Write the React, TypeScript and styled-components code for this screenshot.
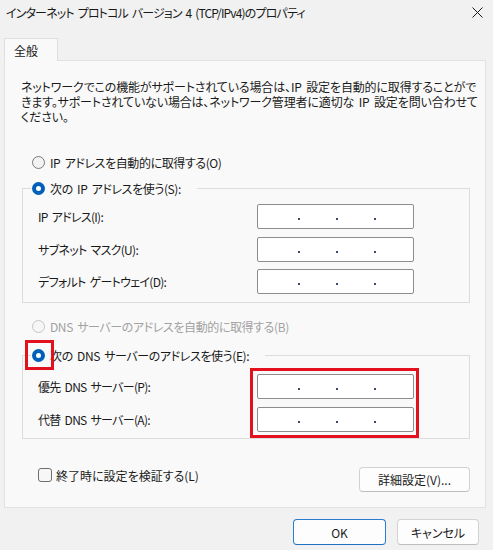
import React from 'react';
import styled, { createGlobalStyle } from 'styled-components';

const GlobalStyle = createGlobalStyle`
  html, body {
    margin: 0;
    padding: 0;
    background: #f1f1f1;
  }
  body {
    font-family: "Noto Sans CJK JP", "Noto Sans", sans-serif;
    font-feature-settings: "palt";
    font-size: 12px;
    word-spacing: 2px;
    color: #1a1a1a;
  }
`;

const Window = styled.div`
  width: 493px;
  height: 550px;
  display: flex;
  flex-direction: column;
  background: #f1f1f1;
  overflow: hidden;
`;

const TitleBar = styled.div`
  height: 25px;
  display: flex;
  align-items: center;
  justify-content: space-between;
  padding: 0 10px 0 6px;
`;

const Title = styled.span`
  white-space: nowrap;
  letter-spacing: -0.85px;
`;

const TabStrip = styled.div`
  display: flex;
  margin: 13px 0 -1px 4px;
  position: relative;
  z-index: 1;
`;

const Tab = styled.div`
  width: 54px;
  height: 23px;
  box-sizing: border-box;
  padding: 3px 0 0 9px;
  background: #f9f9f9;
  border: 1px solid #dedede;
  border-bottom: none;
`;

const Panel = styled.div`
  margin: 0 7px 0 4px;
  height: 448px;
  box-sizing: border-box;
  padding: 18px 15px 0 17px;
  background: #f9f9f9;
  border: 1px solid #e2e2e2;
  display: flex;
  flex-direction: column;
`;

const Intro = styled.p`
  margin: 0 0 0 -1px;
  line-height: 15px;
  white-space: nowrap;
  letter-spacing: -0.15px;
`;

const OptionRow = styled.label<{ $top: number; $disabled?: boolean }>`
  display: flex;
  align-items: center;
  gap: 5px;
  height: 16px;
  margin: ${(p) => p.$top}px 0 0 10px;
  color: ${(p) => (p.$disabled ? '#a2a2a2' : 'inherit')};
  white-space: nowrap;
  letter-spacing: -0.4px;
`;

const Radio = styled.span<{ $checked?: boolean; $disabled?: boolean }>`
  position: relative;
  width: 13px;
  height: 13px;
  box-sizing: border-box;
  border-radius: 50%;
  flex: none;
  border: ${(p) =>
    p.$checked ? 'none' : `1px solid ${p.$disabled ? '#c6c6c6' : '#7a7a7a'}`};
  background: ${(p) => (p.$checked ? '#005fb8' : p.$disabled ? '#f6f6f6' : '#f2f2f2')};

  &::after {
    content: '';
    display: ${(p) => (p.$checked ? 'block' : 'none')};
    position: absolute;
    left: 4px;
    top: 4px;
    width: 5px;
    height: 5px;
    border-radius: 50%;
    background: #fff;
  }
`;

const Marked = styled.span`
  position: relative;
  display: inline-flex;
`;

const RedFrame = styled.span<{ $inset: string }>`
  position: absolute;
  inset: ${(p) => p.$inset};
  border: 3px solid #e3111d;
  pointer-events: none;
`;

const Group = styled.fieldset<{ $top: number; $pt: number; $pb: number }>`
  margin: ${(p) => p.$top}px 0 0 0;
  padding: ${(p) => p.$pt}px 55px ${(p) => p.$pb}px 15px;
  border: 1px solid #dcdcdc;
  display: flex;
  min-width: 0;
`;

const Legend = styled.legend`
  margin-left: -7px;
  padding: 0 16px 0 1px;
  height: 16px;
  display: flex;
  align-items: center;
  gap: 5px;
  white-space: nowrap;
  letter-spacing: -0.4px;
`;

const Labels = styled.div<{ $gap: number }>`
  flex: 1;
  display: flex;
  flex-direction: column;
  gap: ${(p) => p.$gap}px;
`;

const FieldLabel = styled.div`
  height: 25px;
  display: flex;
  align-items: center;
  white-space: nowrap;
  letter-spacing: -0.7px;
`;

const Fields = styled.div<{ $gap: number }>`
  position: relative;
  display: flex;
  flex-direction: column;
  gap: ${(p) => p.$gap}px;
`;

const IpBox = styled.div`
  width: 157px;
  height: 25px;
  box-sizing: border-box;
  background: #fff;
  border: 1px solid #8d8d8d;
  border-radius: 2px;
  display: flex;
  align-items: center;
  padding-left: 40px;
  gap: 36px;
`;

const Dot = styled.span`
  width: 2px;
  height: 2px;
  margin-top: 5px;
  background: #3a4b66;
`;

const BottomRow = styled.div`
  display: flex;
  justify-content: space-between;
  align-items: flex-start;
  margin-top: 28px;
`;

const CheckRow = styled.label`
  display: flex;
  align-items: center;
  gap: 4px;
  height: 16px;
  margin-left: 16px;
  white-space: nowrap;
`;

const Checkbox = styled.span`
  width: 14px;
  height: 14px;
  box-sizing: border-box;
  border: 1px solid #6e6e6e;
  border-radius: 3px;
  background: #f7f7f7;
`;

const Button = styled.button<{ $w: number; $h: number; $primary?: boolean }>`
  width: ${(p) => p.$w}px;
  height: ${(p) => p.$h}px;
  box-sizing: border-box;
  background: #fdfdfd;
  border: 1px solid ${(p) => (p.$primary ? '#2b7bd0' : '#d2d2d2')};
  border-bottom-color: ${(p) => (p.$primary ? '#1f6fc5' : '#bdbdbd')};
  border-radius: 4px;
  font: inherit;
  color: #1a1a1a;
  padding: 0;
  cursor: pointer;
`;

const Footer = styled.div`
  display: flex;
  justify-content: flex-end;
  gap: 11px;
  margin: 11px 14px 0 0;
`;

const ipRow = () => (
  <IpBox>
    <Dot />
    <Dot />
    <Dot />
  </IpBox>
);

export default function App() {
  return (
    <>
      <GlobalStyle />
      <Window>
        <TitleBar>
          <Title>インターネット プロトコル バージョン 4 (TCP/IPv4)のプロパティ</Title>
          <svg width="11" height="11" viewBox="0 0 11 11">
            <path d="M0.5 0.5 L10.5 10.5 M10.5 0.5 L0.5 10.5" stroke="#1a1a1a" strokeWidth="1" />
          </svg>
        </TitleBar>

        <TabStrip>
          <Tab>全般</Tab>
        </TabStrip>

        <Panel>
          <Intro>
            ネットワークでこの機能がサポートされている場合は、IP 設定を自動的に取得することがで
            <br />
            きます。サポートされていない場合は、ネットワーク管理者に適切な IP 設定を問い合わせて
            <br />
            ください。
          </Intro>

          <OptionRow $top={30}>
            <Radio />
            IP アドレスを自動的に取得する(O)
          </OptionRow>

          <Group $top={10} $pt={8} $pb={8}>
            <Legend>
              <Radio $checked />
              次の IP アドレスを使う(S):
            </Legend>
            <Labels $gap={7.5}>
              <FieldLabel>IP アドレス(I):</FieldLabel>
              <FieldLabel>サブネット マスク(U):</FieldLabel>
              <FieldLabel>デフォルト ゲートウェイ(D):</FieldLabel>
            </Labels>
            <Fields $gap={7.5}>
              {ipRow()}
              {ipRow()}
              {ipRow()}
            </Fields>
          </Group>

          <OptionRow $top={15} $disabled>
            <Radio $disabled />
            DNS サーバーのアドレスを自動的に取得する(B)
          </OptionRow>

          <Group $top={13} $pt={11} $pb={6}>
            <Legend>
              <Marked>
                <Radio $checked />
                <RedFrame $inset="-9px -9px -8px -7px" />
              </Marked>
              次の DNS サーバーのアドレスを使う(E):
            </Legend>
            <Labels $gap={8}>
              <FieldLabel>優先 DNS サーバー(P):</FieldLabel>
              <FieldLabel>代替 DNS サーバー(A):</FieldLabel>
            </Labels>
            <Fields $gap={8}>
              {ipRow()}
              {ipRow()}
              <RedFrame $inset="-6px -5px -6px -7px" />
            </Fields>
          </Group>

          <BottomRow>
            <CheckRow>
              <Checkbox />
              終了時に設定を検証する(L)
            </CheckRow>
            <Button $w={111} $h={25}>詳細設定(V)...</Button>
          </BottomRow>
        </Panel>

        <Footer>
          <Button $w={93} $h={26} $primary>OK</Button>
          <Button $w={82} $h={26}>キャンセル</Button>
        </Footer>
      </Window>
    </>
  );
}
